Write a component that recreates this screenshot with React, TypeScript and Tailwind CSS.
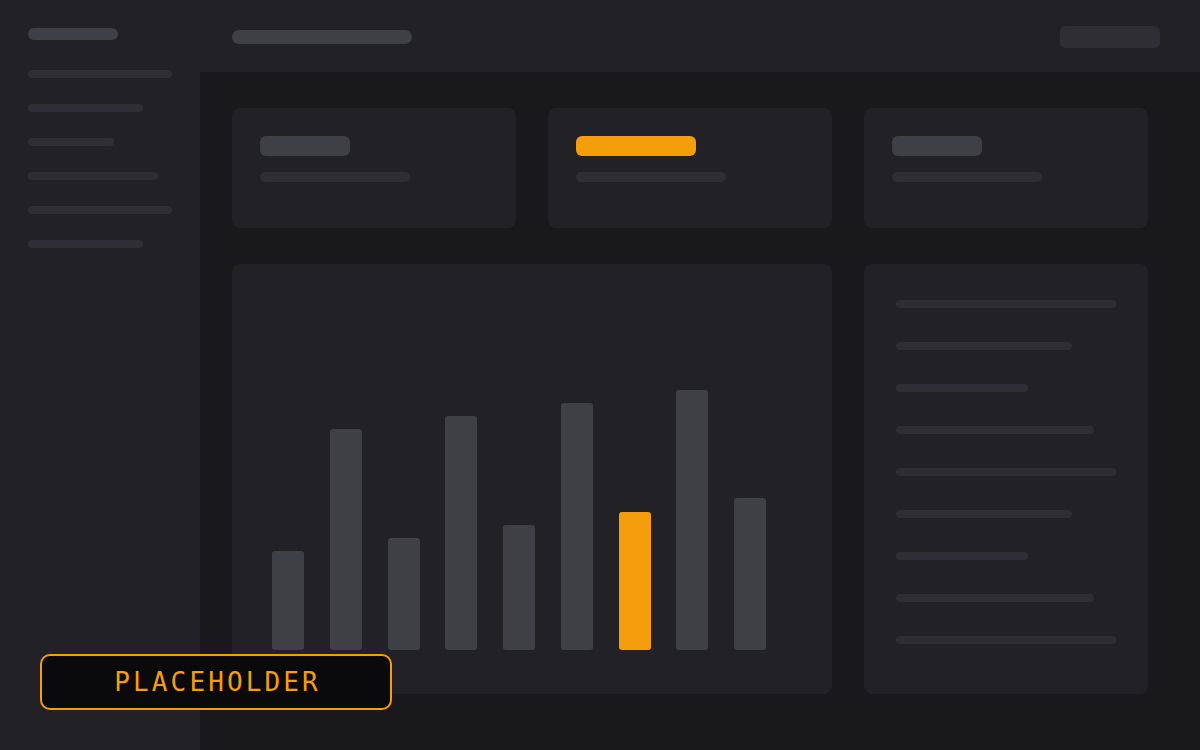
import React from 'react'

const navLines = ['w-[144px]', 'w-[115px]', 'w-[86px]', 'w-[130px]', 'w-[144px]', 'w-[115px]']
const listLines = ['w-[220px]', 'w-[176px]', 'w-[132px]', 'w-[198px]', 'w-[220px]', 'w-[176px]', 'w-[132px]', 'w-[198px]', 'w-[220px]']
const bars = [99, 221, 112, 234, 125, 247, 138, 260, 152]

function StatCard({ accent }: { accent?: boolean }) {
  return (
    <div className="w-[284px] h-[120px] rounded-lg bg-[#222226] px-7 pt-7">
      <div className={`h-5 rounded-md ${accent ? 'bg-[#f59e0b] w-[120px]' : 'bg-[#3f3f46] w-[90px]'}`} />
      <div className="mt-4 w-[150px] h-[10px] rounded-full bg-[#2e2e34]" />
    </div>
  )
}

export default function App() {
  return (
    <div className="relative flex w-[1200px] h-[750px] overflow-hidden bg-[#19191b]">
      {/* Sidebar */}
      <aside className="w-[200px] h-full bg-[#222226] px-7 pt-7">
        <div className="w-[90px] h-3 rounded-full bg-[#3f3f46]" />
        <div className="mt-[30px] flex flex-col gap-[26px]">
          {navLines.map((w, i) => (
            <div key={i} className={`${w} h-2 rounded-full bg-[#2e2e34]`} />
          ))}
        </div>
      </aside>

      <div className="flex-1 flex flex-col">
        {/* Header */}
        <header className="h-[72px] bg-[#222226] flex items-center justify-between pl-8 pr-10">
          <div className="w-[180px] h-[14px] rounded-full bg-[#3f3f46] mt-[2px]" />
          <div className="w-[100px] h-[22px] rounded-md bg-[#2e2e34] mt-[2px]" />
        </header>

        {/* Main */}
        <main className="pl-8 pt-9">
          <div className="flex gap-8">
            <StatCard />
            <StatCard accent />
            <StatCard />
          </div>

          <div className="mt-9 flex gap-8">
            <div className="w-[600px] h-[430px] rounded-lg bg-[#222226] pl-10 pb-11 flex items-end">
              <div className="w-[494px] flex items-end justify-between">
                {bars.map((h, i) => (
                  <div
                    key={i}
                    className={`w-8 rounded-[3px] ${i === 6 ? 'bg-[#f59e0b]' : 'bg-[#3f3f46]'}`}
                    style={{ height: h }}
                  />
                ))}
              </div>
            </div>

            <div className="w-[284px] h-[430px] rounded-lg bg-[#222226] px-8 pt-9">
              <div className="flex flex-col gap-[34px]">
                {listLines.map((w, i) => (
                  <div key={i} className={`${w} h-2 rounded-full bg-[#2e2e34]`} />
                ))}
              </div>
            </div>
          </div>
        </main>
      </div>

      {/* Placeholder badge */}
      <div className="absolute left-10 top-[654px] w-[352px] h-[56px] rounded-[10px] border-2 border-[#f59e0b] bg-[#0a0a0c] flex items-center justify-center">
        <span className="text-[#f59e0b] text-[26px] tracking-[0.12em] leading-none font-['DejaVu_Sans_Mono',monospace] pl-[0.12em]">
          PLACEHOLDER
        </span>
      </div>
    </div>
  )
}
